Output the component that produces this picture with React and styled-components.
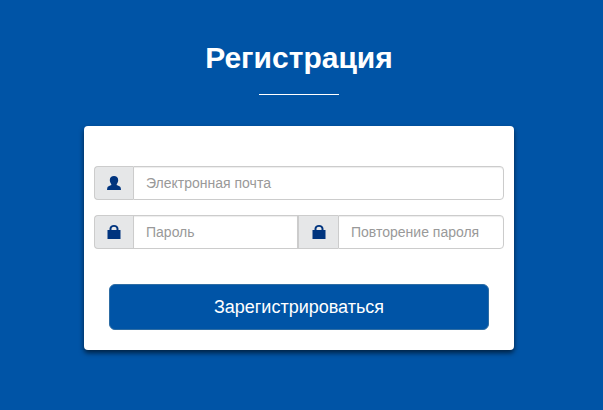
import React from 'react'
import styled, { createGlobalStyle } from 'styled-components'

const Global = createGlobalStyle`
  html, body {
    margin: 0;
    padding: 0;
    background: #0054a6;
  }
  input::placeholder {
    color: #999;
    opacity: 1;
  }
`

const Page = styled.div`
  width: 603px;
  height: 410px;
  box-sizing: border-box;
  padding: 40px 5px 0 0;
  background: #0054a6;
  display: flex;
  flex-direction: column;
  align-items: center;
  overflow: hidden;
`

const Title = styled.h1`
  margin: 0;
  height: 36px;
  font: 700 30px/36px "Liberation Sans", Arial, sans-serif;
  color: #fff;
`

const Divider = styled.div`
  width: 80px;
  height: 1px;
  margin: 18px 0 31px;
  background: #fff;
`

const Card = styled.form`
  width: 430px;
  height: 224px;
  box-sizing: border-box;
  padding: 40px 10px 0;
  background: #fff;
  border-radius: 4px;
  box-shadow: 0 3px 5px rgba(0, 0, 0, 0.6);
`

const Row = styled.div`
  display: flex;
  margin-bottom: 15px;
`

const Addon = styled.span`
  flex: none;
  width: ${p => (p.$first ? '39px' : '40px')};
  height: 34px;
  box-sizing: border-box;
  display: flex;
  align-items: center;
  justify-content: center;
  background: #e6e7e8;
  border: 1px solid #ccc;
  border-right: 0;
  border-radius: ${p => (p.$first ? '4px 0 0 4px' : '0')};
`

const Field = styled.input`
  flex: ${p => (p.$width ? `0 0 ${p.$width}px` : 1)};
  min-width: 0;
  height: 34px;
  box-sizing: border-box;
  padding: 6px 12px;
  border: 1px solid #ccc;
  border-radius: ${p => (p.$last ? '0 4px 4px 0' : '0')};
  background: #fff;
  font: 14px "Liberation Sans", Arial, sans-serif;
  color: #555;
  outline: none;
  box-shadow: inset 0 1px 1px rgba(0, 0, 0, 0.075);
`

const SubmitWrap = styled.div`
  padding: 20px 15px 0;
`

const Submit = styled.button`
  display: block;
  width: 100%;
  height: 46px;
  padding: 0;
  background: #0054a6;
  border: 1px solid #2e6da4;
  border-radius: 6px;
  color: #fff;
  font: 18px "Liberation Sans", Arial, sans-serif;
`

const Icon = styled.svg`
  display: block;
  width: 14px;
  height: 14px;
  fill: #00347e;
`

const UserIcon = () => (
  <Icon viewBox="0 0 14 14">
    <path d="M7 0C4.600 0 2.800 1.500 2.800 4c0 1.700.7 3 1.400 3.900.3.5.1 1.100-.5 1.400C2.300 10 .8 10.400.3 11.700L0 14h14l-.3-2.300c-.5-1.300-2-1.700-3.400-2.400-.6-.3-.8-.9-.5-1.400C10.500 7 11.200 5.700 11.200 4 11.200 1.500 9.400 0 7 0z" />
  </Icon>
)

const LockIcon = () => (
  <Icon viewBox="0 0 14 14">
    <path fillRule="evenodd" d="M2.500 5V3.800C2.500 1.300 4.500 0 7 0s4.500 1.300 4.500 3.800V5h2v9H.5V5h2zM4.500 5h5V3.800C9.500 2.500 8.400 1.700 7 1.700S4.500 2.500 4.500 3.800V5z" />
  </Icon>
)

export default function App() {
  return (
    <Page>
      <Global />
      <Title>Регистрация</Title>
      <Divider />
      <Card>
        <Row>
          <Addon $first><UserIcon /></Addon>
          <Field $last placeholder="Электронная почта" />
        </Row>
        <Row>
          <Addon $first><LockIcon /></Addon>
          <Field $width={165} placeholder="Пароль" />
          <Addon><LockIcon /></Addon>
          <Field $last placeholder="Повторение пароля" />
        </Row>
        <SubmitWrap>
          <Submit type="button">Зарегистрироваться</Submit>
        </SubmitWrap>
      </Card>
    </Page>
  )
}
